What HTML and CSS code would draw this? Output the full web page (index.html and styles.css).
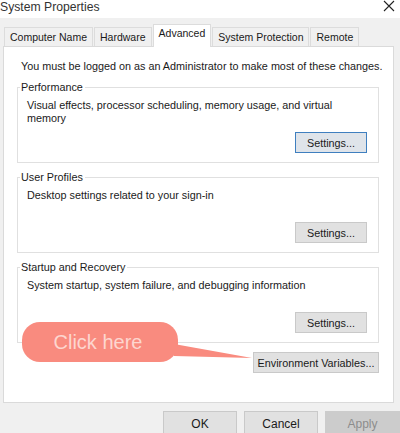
FILE: index.html
```html
<!DOCTYPE html>
<html>
<head>
<meta charset="utf-8">
<link rel="stylesheet" href="styles.css">
</head>
<body>
<div class="window">
  <div class="titlebar">
    <span class="title">System Properties</span>
    <svg class="close" width="12" height="12" viewBox="0 0 12 12"><path d="M1 1 L11 11 M11 1 L1 11" stroke="#222" stroke-width="1.1" fill="none"/></svg>
  </div>
  <div class="tabs">
    <div class="tab">Computer Name</div>
    <div class="tab">Hardware</div>
    <div class="tab active">Advanced</div>
    <div class="tab">System Protection</div>
    <div class="tab">Remote</div>
  </div>
  <div class="panel">
    <p class="intro">You must be logged on as an Administrator to make most of these changes.</p>
    <fieldset class="group">
      <legend>Performance</legend>
      <div class="group-body">
        <p class="desc">Visual effects, processor scheduling, memory usage, and virtual memory</p>
        <div class="actions"><button class="btn focused">Settings...</button></div>
      </div>
    </fieldset>
    <fieldset class="group">
      <legend>User Profiles</legend>
      <div class="group-body">
        <p class="desc">Desktop settings related to your sign-in</p>
        <div class="actions"><button class="btn">Settings...</button></div>
      </div>
    </fieldset>
    <fieldset class="group">
      <legend>Startup and Recovery</legend>
      <div class="group-body">
        <p class="desc">System startup, system failure, and debugging information</p>
        <div class="actions"><button class="btn">Settings...</button></div>
      </div>
    </fieldset>
    <div class="env-row"><button class="btn env">Environment Variables...</button></div>
    <div class="callout">
      <svg class="tail" width="80" height="20" viewBox="0 0 80 20"><polygon points="0,2 78,16 0,14" fill="#f98b7f"/></svg>
      <div class="pill">Click here</div>
    </div>
  </div>
  <div class="footer">
    <button class="btn foot">OK</button>
    <button class="btn foot">Cancel</button>
    <button class="btn foot disabled">Apply</button>
  </div>
</div>
</body>
</html>
```

FILE: styles.css
```css
html, body {
  margin: 0;
  padding: 0;
}
body {
  width: 400px;
  height: 433px;
  overflow: hidden;
  background: #f0f0f0;
  font-family: "Liberation Sans", Arial, sans-serif;
  font-size: 10.8px;
  color: #1a1a1a;
}
.window {
  display: flex;
  flex-direction: column;
  height: 433px;
}
.titlebar {
  height: 18px;
  background: #ffffff;
  display: flex;
  justify-content: space-between;
  align-items: flex-start;
  padding: 0 5px 0 0;
}
.title {
  font-size: 12.2px;
  line-height: 14px;
  color: #333;
}
.close {
  margin-top: 0;
}
.tabs {
  height: 28px;
  display: flex;
  align-items: flex-end;
  padding-left: 4px;
  background: #f0f0f0;
}
.tab {
  height: 18px;
  line-height: 18px;
  padding: 0 5px;
  border: 1px solid #dcdcdc;
  border-bottom: none;
  margin-right: 1px;
  background: #f0f0f0;
  font-size: 10.5px;
  color: #1a1a1a;
}
.tab.active {
  height: 22px;
  line-height: 17px;
  background: #ffffff;
  position: relative;
  z-index: 1;
  margin-bottom: -1px;
  padding: 0 5px;
}
.panel {
  position: relative;
  height: 357px;
  box-sizing: border-box;
  margin: 0 6px 0 3px;
  background: #ffffff;
  border: 1px solid #dadada;
  padding: 13px 14px 0 13px;
}
.intro {
  margin: 0 0 9px 4px;
  line-height: 13px;
  white-space: nowrap;
}
.group {
  margin: 0 0 9px 0;
  padding: 0;
  border: 1px solid #e0e0e0;
  height: 81px;
  box-sizing: border-box;
}
.group legend {
  padding: 0 2px 0 1px;
  margin-left: 2px;
  line-height: 11px;
}
.group-body {
  display: flex;
  flex-direction: column;
  height: 100%;
  box-sizing: border-box;
  padding: 6px 11px 9px 9px;
}
.desc {
  margin: 0;
  line-height: 13px;
}
.actions {
  margin-top: auto;
  display: flex;
  justify-content: flex-end;
}
.btn {
  font-family: "Liberation Sans", Arial, sans-serif;
  font-size: 10.8px;
  color: #1a1a1a;
  background: #e1e1e1;
  border: 1px solid #c9c9c9;
  height: 21px;
  width: 72px;
  padding: 0;
  margin: 0;
}
.btn.focused {
  border-color: #3f7fbf;
  background: #dfe4ea;
}
.env-row {
  display: flex;
  justify-content: flex-end;
  margin-top: 4px;
}
.btn.env {
  width: 126px;
}
.callout {
  position: absolute;
  left: 18px;
  top: 275px;
  width: 240px;
  height: 42px;
}
.pill {
  position: absolute;
  left: 0;
  top: 0;
  width: 156px;
  height: 40px;
  border-radius: 18px;
  background: #f98b7f;
  color: #fdd6cf;
  font-family: "Liberation Sans", Arial, sans-serif;
  font-size: 20px;
  line-height: 40px;
  text-align: center;
  box-sizing: border-box;
  padding-right: 4px;
}
.tail {
  position: absolute;
  left: 152px;
  top: 20px;
}
.footer {
  flex: 1;
  display: flex;
  justify-content: flex-end;
  align-items: flex-start;
  padding-top: 8px;
  gap: 7px;
  overflow: hidden;
}
.btn.foot {
  width: 74px;
  height: 26px;
  font-size: 12px;
}
.btn.disabled {
  background: #cccccc;
  border-color: #cccccc;
  color: #8c8c8c;
  width: 75px;
}
```
